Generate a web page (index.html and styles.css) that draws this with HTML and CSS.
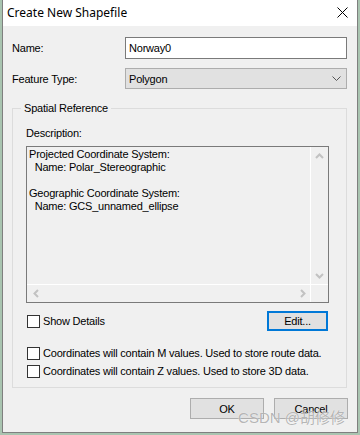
FILE: index.html
```html
<!DOCTYPE html>
<html>
<head>
<meta charset="utf-8">
<link rel="stylesheet" href="styles.css">
</head>
<body>
<div class="window">
  <div class="titlebar">
    <span class="title">Create New Shapefile</span>
    <svg class="close" width="11" height="11" viewBox="0 0 11 11"><path d="M0.5 0.5 L10.5 10.5 M10.5 0.5 L0.5 10.5" stroke="#000" stroke-width="1"/></svg>
  </div>
  <div class="content">
    <div class="row name-row">
      <span class="label">Name:</span>
      <div class="input">Norway0</div>
    </div>
    <div class="row type-row">
      <span class="label">Feature Type:</span>
      <div class="combo"><span>Polygon</span>
        <svg width="9" height="5" viewBox="0 0 9 5"><path d="M0.5 0.5 L4.5 4.5 L8.5 0.5" fill="none" stroke="#555" stroke-width="1"/></svg>
      </div>
    </div>
    <fieldset class="group">
      <legend>Spatial Reference</legend>
      <div class="desc-label">Description:</div>
      <div class="textarea">
        <div class="text">Projected Coordinate System:
  Name: Polar_Stereographic

Geographic Coordinate System:
  Name: GCS_unnamed_ellipse</div>
        <div class="vscroll">
          <svg width="9" height="6" viewBox="0 0 9 6"><path d="M1 5 L4.5 1.5 L8 5" fill="none" stroke="#c2c2c2" stroke-width="2"/></svg>
          <svg width="9" height="6" viewBox="0 0 9 6"><path d="M1 1 L4.5 4.5 L8 1" fill="none" stroke="#c2c2c2" stroke-width="2"/></svg>
        </div>
        <div class="hscroll">
          <svg width="6" height="9" viewBox="0 0 6 9"><path d="M5 1 L1.5 4.5 L5 8" fill="none" stroke="#c2c2c2" stroke-width="2"/></svg>
          <svg width="6" height="9" viewBox="0 0 6 9"><path d="M1 1 L4.5 4.5 L1 8" fill="none" stroke="#c2c2c2" stroke-width="2"/></svg>
        </div>
        <div class="corner"></div>
      </div>
      <div class="details-row">
        <label class="check"><span class="box"></span>Show Details</label>
        <div class="btn edit">Edit...</div>
      </div>
      <label class="check m-row"><span class="box"></span>Coordinates will contain M values. Used to store route data.</label>
      <label class="check"><span class="box"></span>Coordinates will contain Z values. Used to store 3D data.</label>
    </fieldset>
    <div class="buttons">
      <div class="btn">OK</div>
      <div class="btn">Cancel</div>
    </div>
  </div>
  <div class="watermark">CSDN @胡修修</div>
</div>
</body>
</html>
```
FILE: styles.css
```css
html, body {
  margin: 0;
  padding: 0;
}
body {
  width: 360px;
  height: 435px;
  background: #a9c4b0;
  overflow: hidden;
  font-family: "Liberation Sans", Arial, sans-serif;
  font-size: 11px;
  letter-spacing: -0.2px;
  color: #000;
}
.window {
  position: relative;
  margin-left: 2px;
  width: 356px;
  height: 433px;
  box-sizing: border-box;
  border: 1px solid #7f7f7f;
  border-top: none;
  background: #f0f0f0;
  display: flex;
  flex-direction: column;
}
.titlebar {
  height: 26px;
  background: #fff;
  display: flex;
  align-items: center;
  justify-content: space-between;
  padding: 0 9px 0 4px;
  flex: none;
}
.title {
  font-family: "Noto Sans", "Open Sans", sans-serif;
  font-size: 12px;
  letter-spacing: 0;
  color: #000;
  margin-top: -1px;
}
.close {
  display: block;
  margin-top: -1px;
}
.content {
  padding: 11px 8px 0 9px;
  display: flex;
  flex-direction: column;
}
.row {
  display: flex;
  align-items: center;
}
.label {
  width: 113px;
  flex: none;
}
.name-row {
  height: 22px;
}
.input {
  width: 222px;
  height: 22px;
  box-sizing: border-box;
  border: 1px solid #7a7a7a;
  background: #fff;
  padding: 3px 3px 0 3px;
  line-height: 14px;
}
.type-row {
  margin-top: 9px;
  height: 21px;
}
.combo {
  width: 222px;
  height: 21px;
  box-sizing: border-box;
  border: 1px solid #adadad;
  background: #e1e1e1;
  display: flex;
  align-items: center;
  justify-content: space-between;
  padding: 0 5px 0 3px;
}
.group {
  margin: 13px 0 0 0;
  width: 335px;
  box-sizing: border-box;
  border: 1px solid #dcdcdc;
  padding: 0 0 7px 0;
  min-width: 0;
}
.group legend {
  margin-left: 8px;
  padding: 0 3px;
  line-height: 13px;
}
.desc-label {
  margin: 12px 0 0 13px;
  line-height: 13px;
}
.textarea {
  margin: 6px 0 0 13px;
  width: 303px;
  height: 157px;
  box-sizing: border-box;
  border: 1px solid #7a7a7a;
  display: grid;
  grid-template-columns: 1fr 18px;
  grid-template-rows: 1fr 18px;
}
.text {
  white-space: pre;
  padding: 1px 0 0 2px;
  line-height: 13px;
  overflow: hidden;
}
.vscroll {
  border-left: 1px solid #fff;
  display: flex;
  flex-direction: column;
  justify-content: space-between;
  align-items: center;
  padding: 6px 0 5px;
}
.hscroll {
  border-top: 1px solid #fff;
  display: flex;
  justify-content: space-between;
  align-items: center;
  padding: 0 4px 0 6px;
}
.corner {
  border-top: 1px solid #fff;
  border-left: 1px solid #fff;
}
.details-row {
  margin: 8px 18px 0 14px;
  height: 20px;
  display: flex;
  align-items: center;
  justify-content: space-between;
}
.check {
  display: flex;
  align-items: center;
  height: 18px;
  margin-left: 14px;
  white-space: nowrap;
}
.details-row .check {
  margin-left: 0;
}
.box {
  width: 13px;
  height: 13px;
  box-sizing: border-box;
  border: 1px solid #333;
  background: #fff;
  margin-right: 3px;
  flex: none;
}
.m-row {
  margin-top: 13px;
}
.btn {
  height: 21px;
  box-sizing: border-box;
  border: 1px solid #adadad;
  background: #e1e1e1;
  display: flex;
  align-items: center;
  justify-content: center;
  width: 74px;
}
.btn.edit {
  width: 61px;
  height: 20px;
  border: 2px solid #0078d7;
}
.buttons {
  margin: 10px 1px 0 0;
  display: flex;
  justify-content: flex-end;
  gap: 10px;
}
.watermark {
  position: absolute;
  right: 12px;
  bottom: 5px;
  font-family: "Liberation Sans", "Noto Sans CJK SC", sans-serif;
  font-size: 15px;
  letter-spacing: 0;
  color: rgba(150, 150, 150, 0.7);
  text-shadow: 0 0 1px #fff;
}
```
